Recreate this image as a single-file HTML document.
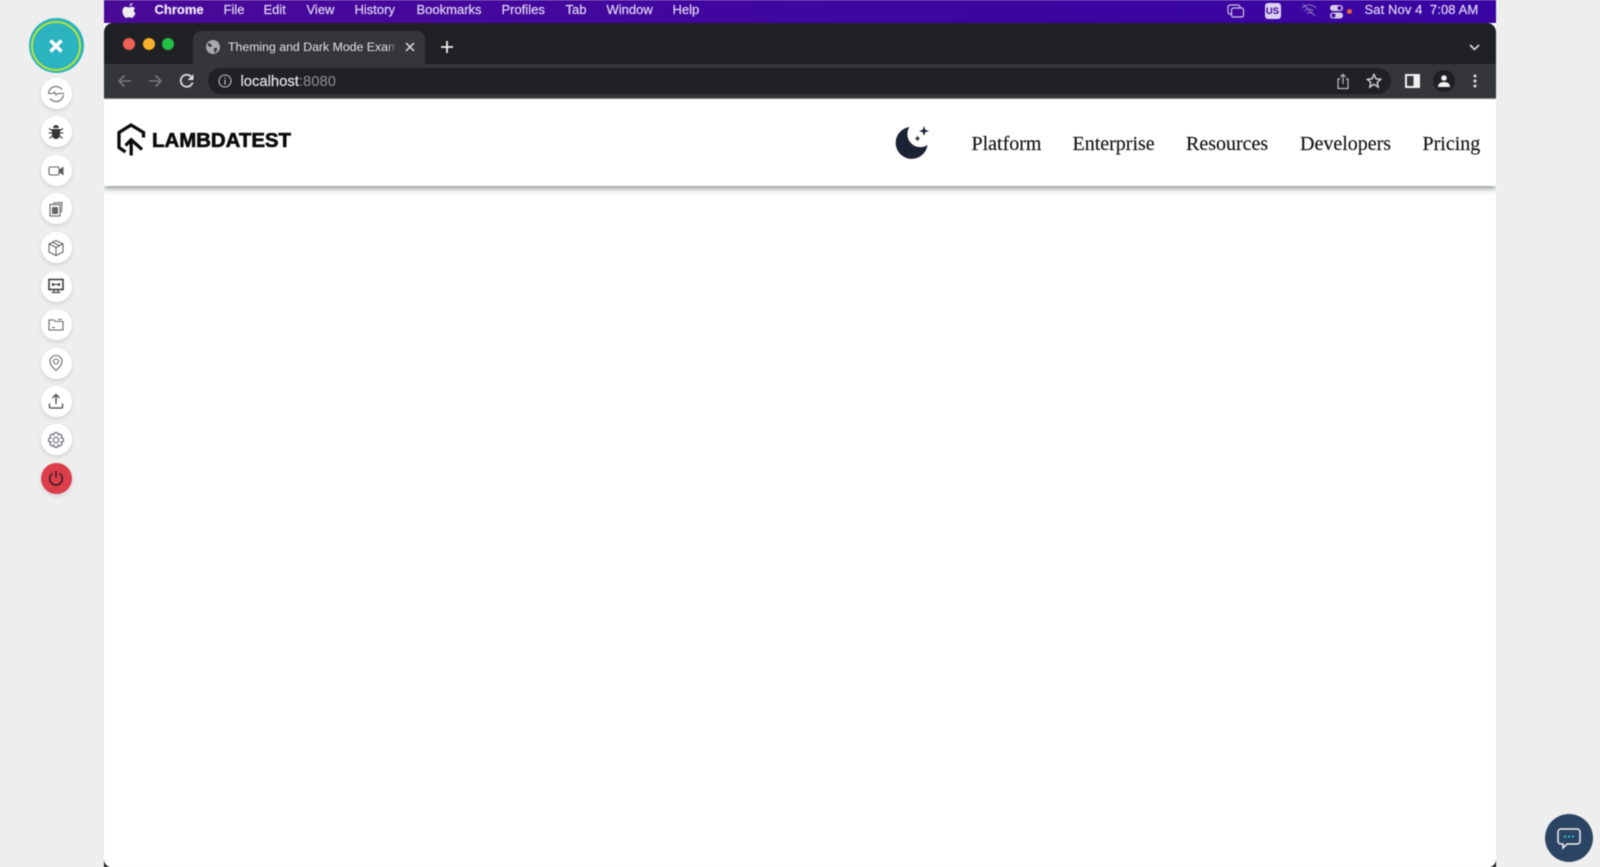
<!DOCTYPE html>
<html lang="en">
<head>
<meta charset="utf-8">
<title>Theming and Dark Mode Example</title>
<style>
html,body{margin:0;padding:0;width:1600px;height:867px;overflow:hidden;background:#eeeeee;font-family:"Liberation Sans",sans-serif}
.a{position:absolute}
#win{left:103.5px;top:0;width:1392.5px;height:867px;background:#fff;overflow:hidden}
#menu{left:0;top:0;width:100%;height:23px;background:linear-gradient(90deg,#4a0a98 0%,#3f06a0 50%,#3905a2 100%)}
.m{position:absolute;top:2px;font-size:13px;line-height:15px;color:#e0d4f2;white-space:nowrap;-webkit-text-stroke:.2px #e0d4f2}
#strip{left:0;top:23px;width:100%;height:41px;background:#202124;border-radius:9px 9px 0 0}
#tool{left:0;top:64px;width:100%;height:34px;background:#35363a}
#line{left:0;top:98px;width:100%;height:1px;background:#8a8a8c}
#tab{left:89.5px;top:31px;width:232px;height:33px;background:#35363a;border-radius:8px 8px 0 0}
#url{left:104.5px;top:68px;width:1183px;height:26px;background:#202124;border-radius:13px}
#nav{left:0;top:99px;width:100%;height:87px;background:#fff;box-shadow:0 2px 6px rgba(40,50,50,.6);}
.n{position:absolute;top:131.5px;font:20px/24px "Liberation Serif",serif;color:#111;white-space:nowrap;-webkit-text-stroke:.15px #111}
.c{position:absolute;left:40.5px;width:31px;height:31px;border-radius:50%;background:#fff;box-shadow:0 2px 5px rgba(0,0,0,.12)}
.c svg{position:absolute;left:6.5px;top:6.5px;width:18px;height:18px;fill:none;stroke:#666;stroke-width:1.1}
.soft{filter:blur(.5px)}
</style>
</head>
<body>
<div class="a soft" id="win">
  <div class="a" id="menu">
    <svg class="a" style="left:18.500px;top:3px" width="14" height="16" viewBox="0 0 14 16"><path fill="#eee" d="M10.4 0c.1 1.500-1.200 3-2.800 2.900C7.500 1.500 8.900.2 10.400 0zM13 5.300c-1.800 1.200-1.500 3.900.5 4.800-.7 1.900-2.200 4.700-3.800 4.700-1 0-1.500-.6-2.700-.6s-1.800.6-2.700.6C2.300 14.800.4 11 .4 8.100c0-2.800 1.800-4.400 3.600-4.400 1.100 0 2.100.7 2.800.7s1.800-.8 3.100-.7c1 .1 2.300.5 3.100 1.600z"/></svg>
    <span class="m" style="left:51px;color:#f2ecfa;font-weight:bold">Chrome</span>
    <span class="m" style="left:120px">File</span>
    <span class="m" style="left:160px">Edit</span>
    <span class="m" style="left:203px">View</span>
    <span class="m" style="left:251px">History</span>
    <span class="m" style="left:313px">Bookmarks</span>
    <span class="m" style="left:398px">Profiles</span>
    <span class="m" style="left:462px">Tab</span>
    <span class="m" style="left:503px">Window</span>
    <span class="m" style="left:569px">Help</span>
    <svg class="a" style="left:1123.500px;top:3px" width="18" height="16" viewBox="0 0 18 16" fill="none" stroke="#cfc6e6" stroke-width="1.200"><rect x="1" y="2" width="12" height="9" rx="2"/><rect x="4.500" y="5" width="12" height="9" rx="2" fill="#3f06a0"/></svg>
    <div class="a" style="left:1161px;top:3px;width:16px;height:16px;border-radius:3px;background:#dcd2ef;color:#3f06a0;font-size:9.500px;font-weight:bold;line-height:17px;text-align:center">US</div>
    <svg class="a" style="left:1197px;top:3px" width="16" height="15" viewBox="0 0 16 15" fill="none" stroke="#8d7cc2" stroke-width="1"><path d="M1 5c4-4 10-4 14 0M3.500 8c2.500-2.500 6.500-2.500 9 0M6 10.500c1.200-1.200 2.800-1.200 4 0M2 1l12 12"/></svg>
    <svg class="a" style="left:1225px;top:3.500px" width="16" height="15" viewBox="0 0 16 15"><rect x="1" y="1" width="13" height="6" rx="3" fill="#d4cde6"/><circle cx="10.500" cy="4" r="2" fill="#3f06a0"/><rect x="1" y="8.500" width="13" height="6" rx="3" fill="#d4cde6"/><circle cx="4.500" cy="11.500" r="2" fill="#3f06a0"/></svg>
    <div class="a" style="left:1243px;top:8.500px;width:5px;height:5px;border-radius:50%;background:#e8643c"></div>
    <span class="m" style="left:1261px;letter-spacing:.1px">Sat Nov 4&nbsp; 7:08 AM</span>
  </div>

  <div class="a" id="strip">
    <div class="a" style="left:19.500px;top:14.500px;width:12px;height:12px;border-radius:50%;background:#ee5f57"></div>
    <div class="a" style="left:39px;top:14.500px;width:12px;height:12px;border-radius:50%;background:#f6b02e"></div>
    <div class="a" style="left:58.500px;top:14.500px;width:12px;height:12px;border-radius:50%;background:#21c145"></div>
  </div>
  <div class="a" id="tool"></div>
  <div class="a" id="line"></div>
  <div class="a" id="tab">
    <svg class="a" style="left:12.500px;top:9px" width="14" height="14" viewBox="0 0 14 14"><circle cx="7" cy="7" r="7" fill="#a8a9ac"/><path fill="#35363a" d="M2 3l3 1 1 2-2 1-2-1zM8 8l3 0 0 2-2 3-1-2z"/></svg>
    <span class="a" style="left:35px;top:7.500px;width:171px;overflow:hidden;font-size:12.300px;line-height:16px;color:#e3e4e6;white-space:nowrap">Theming and Dark Mode Example</span>
    <div class="a" style="left:194px;top:4px;width:14px;height:24px;background:linear-gradient(90deg,rgba(53,54,58,0),#35363a 70%)"></div>
    <svg class="a" style="left:212px;top:11px" width="10" height="10" viewBox="0 0 10 10" stroke="#dedfe1" stroke-width="1.500"><path d="M1 1l8 8M9 1l-8 8"/></svg>
  </div>
  <svg class="a" style="left:337px;top:41px" width="12" height="12" viewBox="0 0 12 12" stroke="#f0f0f0" stroke-width="1.800"><path d="M6 0v12M0 6h12"/></svg>
  <svg class="a" style="left:1365px;top:44px" width="11" height="7" viewBox="0 0 11 7" fill="none" stroke="#d8d9db" stroke-width="1.600"><path d="M1 1l4.500 4.500L10 1"/></svg>

  <svg class="a" style="left:13px;top:74px" width="15" height="14" viewBox="0 0 15 14" fill="none" stroke="#75767a" stroke-width="1.600"><path d="M14 7H2M7.500 1.500L2 7l5.500 5.500"/></svg>
  <svg class="a" style="left:44px;top:74px" width="15" height="14" viewBox="0 0 15 14" fill="none" stroke="#75767a" stroke-width="1.600"><path d="M1 7h12M7.500 1.500L13 7l-5.500 5.500"/></svg>
  <svg class="a" style="left:75px;top:73px" width="16" height="16" viewBox="0 0 16 16" fill="none" stroke="#dcdde0" stroke-width="1.800"><path d="M13.500 9.500A6 6 0 1 1 12 3.500"/><path fill="#dcdde0" stroke="none" d="M14.500 1v6h-6z"/></svg>

  <div class="a" id="url"></div>
  <svg class="a" style="left:114px;top:74px" width="14" height="14" viewBox="0 0 14 14" fill="none" stroke="#bfc0c3" stroke-width="1.100"><circle cx="7" cy="7" r="6"/><path d="M7 6v4.500M7 3.500v1.300" stroke-width="1.300"/></svg>
  <span class="a" style="left:137px;top:73px;font-size:14.800px;line-height:18px;color:#e8e9eb;white-space:nowrap;-webkit-text-stroke:.15px #e8e9eb">localhost<span style="color:#8f9094;-webkit-text-stroke:0">:8080</span></span>

  <svg class="a" style="left:1232px;top:73px" width="14" height="17" viewBox="0 0 14 17" fill="none" stroke="#b9babd" stroke-width="1.200"><path d="M4 6H2v9.500h10V6h-2M7 11V1.500M4.300 4L7 1.300 9.700 4"/></svg>
  <svg class="a" style="left:1262px;top:73px" width="16" height="16" viewBox="0 0 16 16" fill="none" stroke="#d5d6d8" stroke-width="1.400"><path d="M8 1.500l2 4.300 4.700.5-3.500 3.200 1 4.600L8 11.300l-4.200 2.800 1-4.600L1.300 6.300 6 5.800z"/></svg>
  <svg class="a" style="left:1301px;top:74px" width="15" height="14" viewBox="0 0 15 14"><rect width="15" height="14" fill="#f0f0f0"/><rect x="2" y="2" width="6.500" height="10" fill="#35363a"/></svg>
  <div class="a" style="left:1329px;top:70px;width:22px;height:22px;border-radius:50%;background:#1f2023"></div>
  <svg class="a" style="left:1334px;top:75px" width="12" height="12" viewBox="0 0 12 12" fill="#f0f0f0"><circle cx="6" cy="3" r="2.800"/><path d="M0 12c0-3.500 2.500-5 6-5s6 1.500 6 5z"/></svg>
  <svg class="a" style="left:1369px;top:74px" width="4" height="14" viewBox="0 0 4 14" fill="#dcdde0"><circle cx="2" cy="2" r="1.500"/><circle cx="2" cy="7" r="1.500"/><circle cx="2" cy="12" r="1.500"/></svg>

  <div class="a" id="nav"></div>
  <svg class="a" style="left:10.500px;top:123px" width="32" height="34" viewBox="0 0 32 34" fill="none" stroke="#0c0c0c" stroke-width="3.300"><path d="M11.500 29L5 24.500V9.500L17 2l12.500 7.500V14.500"/><path d="M17.200 32.500V17M11.500 22.500l5.700-5.700 10.800 9.700"/></svg>
  <svg class="a" style="left:48.500px;top:128px" width="142" height="24" viewBox="0 0 142 24"><text x="0" y="19" font-family="Liberation Sans,sans-serif" font-size="20" font-weight="bold" fill="#0c0c0c" stroke="#0c0c0c" stroke-width=".6" textLength="139" lengthAdjust="spacingAndGlyphs">LAMBDATEST</text></svg>

  <svg class="a" style="left:790.500px;top:125px" width="38" height="36" viewBox="0 0 38 36"><path fill="#1a2233" d="M15.500 2A16 16 0 1 0 33.500 20 13 13 0 0 1 15.500 2z"/><path fill="#1a2233" d="M30 1l1.300 3.700L35 6l-3.700 1.300L30 11l-1.300-3.700L25 6l3.700-1.300zM23.500 10.500l.9 2.100 2.100.9-2.100.9-.9 2.100-.9-2.100-2.100-.9 2.100-.9z"/></svg>
  <span class="n" style="left:868px">Platform</span>
  <span class="n" style="left:969px">Enterprise</span>
  <span class="n" style="left:1082.500px">Resources</span>
  <span class="n" style="left:1196.500px">Developers</span>
  <span class="n" style="left:1319px">Pricing</span>

  <svg class="a" style="left:0;top:859px" width="6" height="8" viewBox="0 0 6 8"><path fill="#111" d="M0 0c0 4 2 7 6 8H0z"/></svg>
  <svg class="a" style="left:1386.500px;top:859px" width="6" height="8" viewBox="0 0 6 8"><path fill="#111" d="M6 0c0 4-2 7-6 8h6z"/></svg>
</div>

<div class="a soft" style="left:28.500px;top:18px;width:55px;height:55px;border-radius:50%;background:#2bb3c0"></div>
<div class="a soft" style="left:31px;top:20.500px;width:50px;height:50px;border-radius:50%;border:2.500px solid #b6e23c;box-sizing:border-box"></div>
<svg class="a soft" style="left:49px;top:39px" width="14" height="14" viewBox="0 0 14 14" stroke="#fff" stroke-width="3.500"><path d="M1.500 1.500l11 11M12.500 1.500l-11 11"/></svg>

<div class="c soft" style="top:78px"><svg viewBox="0 0 18 18"><path d="M1.500 8A7.500 7.500 0 0 1 15 4.500M16.500 10A7.500 7.500 0 0 1 3 13.500M1 8.500h5l1.500-1.500L9 10l1.500-1.500H17"/></svg></div>
<div class="c soft" style="top:116px"><svg viewBox="0 0 18 18"><path fill="#333" stroke="none" d="M6 5a3 3 0 0 1 6 0zM5 6h8v6a4 4 0 0 1-8 0z"/><path stroke="#333" d="M5 7.500L2 5.500M13 7.500l3-2M5 10H1.500M13 10h3.500M5 13l-2.500 2.500M13 13l2.500 2.500"/></svg></div>
<div class="c soft" style="top:155px"><svg viewBox="0 0 18 18"><rect x="2" y="5" width="10" height="8" rx="1.500"/><path fill="#555" d="M12.500 8l3.500-2.500v7L12.500 10z"/></svg></div>
<div class="c soft" style="top:193px"><svg viewBox="0 0 18 18"><path d="M6 3l9-.5-.5 10"/><rect x="3" y="4.500" width="10" height="11.500"/><rect x="5" y="7" width="6" height="7" fill="#666" stroke="none"/></svg></div>
<div class="c soft" style="top:232px"><svg viewBox="0 0 18 18"><path d="M9 1.500l7 3.500v8l-7 3.500L2 13V5zM2 5l7 3.500L16 5M9 8.500v8M5.500 3.300l7 3.500"/></svg></div>
<div class="c soft" style="top:270.500px"><svg viewBox="0 0 18 18"><rect x="2" y="2.500" width="14" height="10" stroke-width="1.500" stroke="#333"/><path stroke="#333" d="M5 7.500h8M5 7.500l1.500-1.500M5 7.500L6.500 9M13 7.500L11.500 6M13 7.500L11.500 9M7 12.500v3M11 12.500v3M4.500 15.500h9"/></svg></div>
<div class="c soft" style="top:309px"><svg viewBox="0 0 18 18"><path d="M2 4h5l1.500 1.500H16V14H2zM11 3.500h4M5 11.500h3"/></svg></div>
<div class="c soft" style="top:347.500px"><svg viewBox="0 0 18 18"><path d="M9 16.500C6 13.500 3 11 3 7.500a6 6 0 0 1 12 0c0 3.500-3 6-6 9z"/><circle cx="9" cy="7.500" r="2.500"/></svg></div>
<div class="c soft" style="top:385.500px"><svg viewBox="0 0 18 18"><path stroke="#444" stroke-width="1.300" d="M9 12V3M5.500 6L9 2.500 12.500 6M2.500 11.500V15c0 .5.500 1 1 1h11c.5 0 1-.5 1-1v-3.500"/></svg></div>
<div class="c soft" style="top:424px"><svg viewBox="0 0 18 18" style="stroke:#667"><path d="M7.500 1.500h3l.5 2.300 2-1 2.200 2.200-1.200 2 2.300.5v3l-2.300.5 1.200 2-2.200 2.200-2-1.200-.5 2.300h-3l-.5-2.300-2 1.200L2.800 13l1.200-2-2.300-.5v-3L4 7l-1.200-2L5 2.800l2 1z"/><circle cx="9" cy="9" r="2.800"/></svg></div>
<div class="c soft" style="top:462.500px;background:#dc3d4b"><svg viewBox="0 0 18 18" style="stroke:#2a1a1e;stroke-width:1.400"><path d="M9 2v7M5.500 4.500a6.300 6.300 0 1 0 7 0"/></svg></div>

<div class="a soft" style="left:1544.700px;top:813.700px;width:48px;height:48px;border-radius:50%;background:#2c4463"></div>
<svg class="a soft" style="left:1557px;top:828px" width="24" height="22" viewBox="0 0 24 22" fill="none" stroke="#f2f4f6" stroke-width="1.500"><path d="M4 1h16c1.700 0 3 1.300 3 3v9c0 1.700-1.300 3-3 3H10l-4 4v-4H4c-1.700 0-3-1.300-3-3V4c0-1.700 1.300-3 3-3z"/><path stroke="#2bc0d0" stroke-width="2" stroke-dasharray="2 2" d="M7 8.500h10"/></svg>
</body>
</html>
